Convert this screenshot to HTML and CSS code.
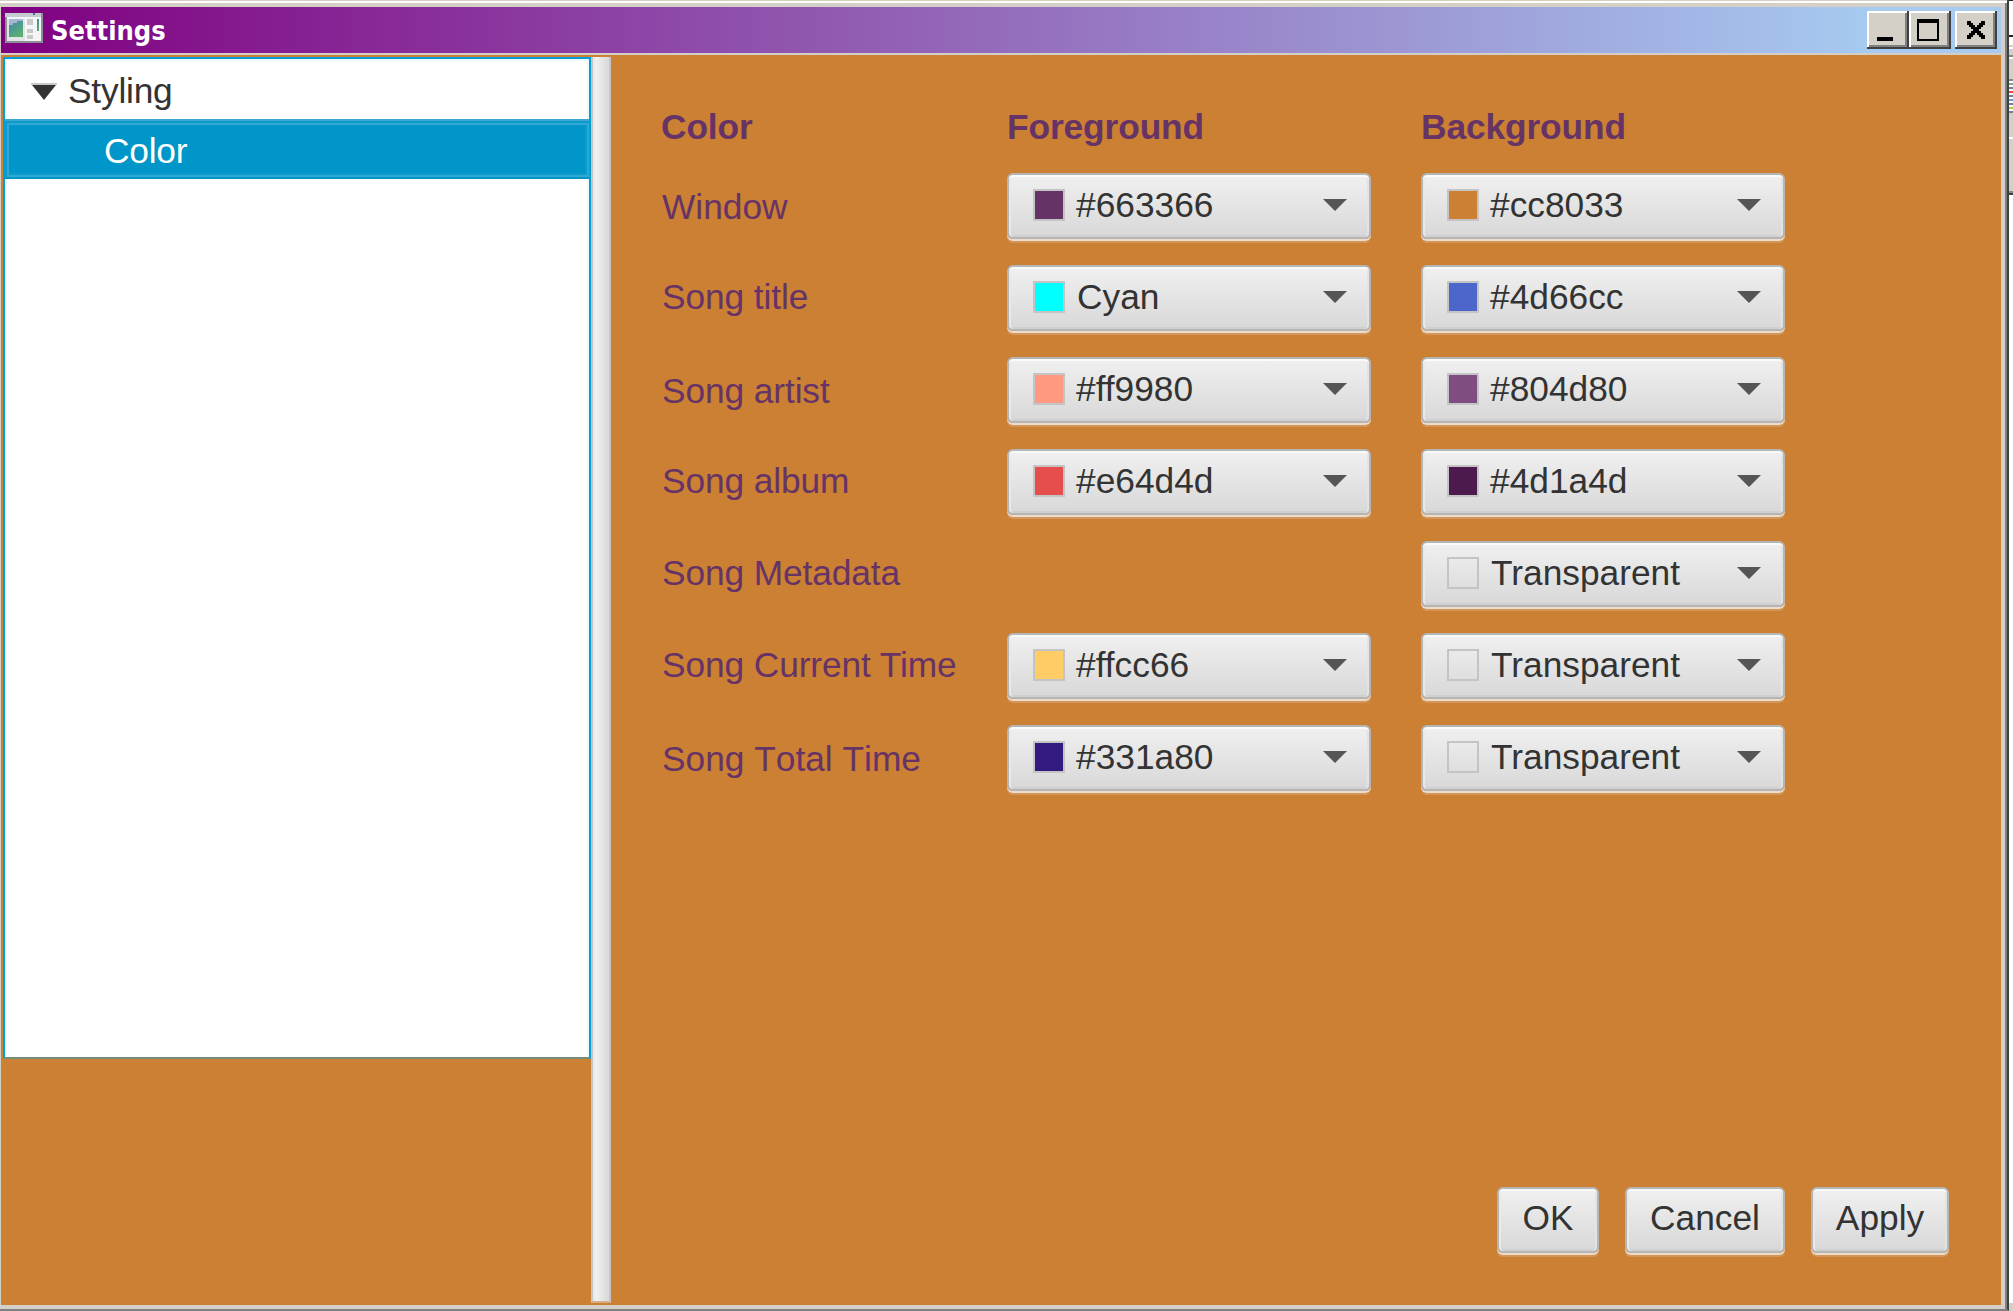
FILE: index.html
```html
<!DOCTYPE html>
<html lang="en">
<head>
<meta charset="utf-8">
<title>Settings</title>
<link rel="stylesheet" href="styles.css">
</head>
<body>
<div class="desktop">
<div class="window">
  <header class="titlebar">
    <svg class="app-icon" width="38" height="30" viewBox="0 0 38 30">
      <defs><linearGradient id="g" x1="0" y1="0" x2="0.6" y2="1"><stop offset="0" stop-color="#4580b4"/><stop offset="1" stop-color="#58b070"/></linearGradient></defs>
      <rect width="38" height="30" fill="#8a9094"/><rect x="2" width="34" height="28" fill="#f4f5f6"/>
      <rect width="36" height="4" fill="#c3ccd0"/><rect x="28" width="2" height="2" fill="#4a6c96"/>
      <rect x="2" y="6" width="18" height="22" fill="#e2e4e6"/><rect x="4" y="6" width="14" height="18" fill="url(#g)"/>
      <path d="M4 6h14v2h-6v2h-4v2H4z" fill="#a4b6d0"/>
      <path d="M22 6h6v6h-6zM22 16h6v4h-6zM22 22h6v4h-6z" fill="#c9c9c9"/>
      <rect x="32" y="6" width="2" height="12" fill="url(#g)"/>
    </svg>
    <h1 class="title">Settings</h1>
    <div class="controls">
      <button class="ctl" aria-label="Minimize"><svg width="42" height="38"><path d="M10 26h16v4H10z"/></svg></button>
      <button class="ctl" aria-label="Maximize"><svg width="42" height="38"><path fill-rule="evenodd" d="M8 8h22v22H8zM10 12v16h18V12z"/></svg></button>
      <button class="ctl close" aria-label="Close"><svg width="42" height="38" shape-rendering="crispEdges"><path d="M12 10h4v2h2v2h2v2h2v-2h2v-2h2v-2h4v4h-2v2h-2v2h-2v2h2v2h2v2h2v4h-4v-2h-2v-2h-2v-2h-2v2h-2v2h-2v2h-4v-4h2v-2h2v-2h2v-2h-2v-2h-2v-2h-2z"/></svg></button>
    </div>
  </header>
  <main class="body">
    <nav class="tree">
      <div class="node"><svg class="disclosure" width="26" height="17"><path d="M0 0h26v2H0z" fill="#c8c8c8"/><path d="M1 2h24L13 17z" fill="#333"/></svg><span>Styling</span></div>
      <div class="node leaf">Color</div>
    </nav>
    <div class="divider"></div>
    <section class="content">
      <div class="grid">
        <div class="head">Color</div><div class="head">Foreground</div><div class="head">Background</div>
        <div class="label low wide">Window</div>
        <div class="picker"><i style="background:#663366"></i><span>#663366</span><b></b></div>
        <div class="picker"><i style="background:#cc8033"></i><span>#cc8033</span><b></b></div>
        <div class="label">Song title</div>
        <div class="picker named"><i style="background:#00ffff"></i><span>Cyan</span><b></b></div>
        <div class="picker"><i style="background:#4d66cc"></i><span>#4d66cc</span><b></b></div>
        <div class="label low">Song artist</div>
        <div class="picker"><i style="background:#ff9980"></i><span>#ff9980</span><b></b></div>
        <div class="picker"><i style="background:#804d80"></i><span>#804d80</span><b></b></div>
        <div class="label">Song album</div>
        <div class="picker"><i style="background:#e64d4d"></i><span>#e64d4d</span><b></b></div>
        <div class="picker"><i style="background:#4d1a4d"></i><span>#4d1a4d</span><b></b></div>
        <div class="label">Song Metadata</div>
        <div></div>
        <div class="picker named"><i></i><span>Transparent</span><b></b></div>
        <div class="label">Song Current Time</div>
        <div class="picker"><i style="background:#ffcc66"></i><span>#ffcc66</span><b></b></div>
        <div class="picker named"><i></i><span>Transparent</span><b></b></div>
        <div class="label low wide">Song Total Time</div>
        <div class="picker"><i style="background:#331a80"></i><span>#331a80</span><b></b></div>
        <div class="picker named"><i></i><span>Transparent</span><b></b></div>
      </div>
      <footer class="actions">
        <button class="btn ok">OK</button><button class="btn cancel">Cancel</button><button class="btn apply">Apply</button>
      </footer>
    </section>
  </main>
</div>
<svg class="behind" width="4" height="1311" shape-rendering="crispEdges">
  <path d="M0 0h4v1H0zM0 35h4v2H0z" fill="#222"/>
  <path d="M0 45h4v2H0zM0 49h4v6H0zM0 59h4v20H0zM0 113h4v24H0zM0 139h4v52H0zM0 1303h4v8H0z" fill="#d4d0c8"/>
  <path d="M0 55h4v2H0zM0 79h4v2H0zM0 191h4v2H0z" fill="#888"/><path d="M0 193h4v2H0z" fill="#404040"/>
  <path d="M0 87h4v2H0zM0 95h4v2H0zM0 103h4v2H0zM0 111h4v2H0z" fill="#708090"/>
  <path d="M0 83h4v2H0z" fill="#7fa58b"/><path d="M0 91h4v2H0z" fill="#f04040"/><path d="M0 99h4v2H0z" fill="#5c9be0"/><path d="M0 107h4v2H0z" fill="#a8d050"/>
</svg>
</div>
</body>
</html>
```
FILE: styles.css
```css
* { box-sizing: border-box; }
body { margin: 0; overflow: hidden; font: 35.3px/40px "Liberation Sans", Arial, sans-serif; color: #333; }
.desktop { display: flex; width: 2013px; height: 1311px; background: #fff; }
.window { display: flex; flex-direction: column; width: 2009px; background: #d4d0c8; padding: 7px 6px 4px 1px; border-right: 2px solid #404040; border-bottom: 2px solid #808080;
  box-shadow: inset 0 1px #d4d0c8, inset 0 3px #fff, inset -2px 0 #808080; }
.behind { display: block; }

.titlebar { display: flex; height: 46px; background: linear-gradient(90deg, #800080, #a6caf0 1870px); padding: 4px 4px 0; }
.app-icon { margin-top: 2px; }
.title { margin: 6px 0 0 8px; flex: 1; color: #fff; font: bold 27px/28px "DejaVu Sans Condensed", "DejaVu Sans", sans-serif; font-stretch: condensed; }
.controls { display: flex; }
.ctl { width: 42px; height: 38px; padding: 0; border: 0; background: #d4d0c8; box-shadow: inset -2px -2px #404040, inset 2px 2px #fff, inset -4px -4px #808080; }
.ctl svg { display: block; }
.close { margin-left: 4px; }

.body { display: flex; height: 1250px; margin-top: 2px; padding: 2px 0 0 2px; background: #cc8033; flex: none; }
.tree { width: 588px; height: 1002px; background: #fff; border: 2px solid #039ed3; border-bottom-color: #768e78; box-shadow: inset 2px 2px #edf8fc, inset -2px 0 #edf8fc; }
.node { height: 60px; display: flex; align-items: flex-start; padding: 12px 0 0 26px; letter-spacing: -0.2px; }
.disclosure { margin: 12px 11px 0 0; }
.leaf { padding: 10px 0 0 99px; color: #fff; background: #0096c9; border-top: 2px solid #3aa8d3; border-bottom: 2px solid #0093c5; box-shadow: inset 2px 2px #0c9bcc, inset -2px -2px #2fa8d4, inset 4px 4px #30a9d4, inset -4px -4px #0c9bcc; }
.divider { width: 20px; height: 1246px; background: linear-gradient(90deg, #f5f5f5, #d9d9d9); border: solid #c6c6c6; border-width: 0 2px; box-shadow: inset 2px 0 #e9e9e9; border-bottom: 2px solid #d8ad83; }

.content { flex: 1; display: flex; flex-direction: column; justify-content: space-between; padding: 48px 52px 52px 50px; }
.grid { display: grid; grid-template-columns: 296px 364px 364px; column-gap: 50px; grid-template-rows: 42px; grid-auto-rows: 66px; row-gap: 26px; color: #663366; }
.head { font-weight: bold; white-space: nowrap; padding-top: 2px; letter-spacing: -0.1px; }
.label { white-space: nowrap; padding: 12px 0 0 1px; letter-spacing: -0.1px; }
.label.low { padding-top: 14px; }
.label.wide { font-kerning: none; letter-spacing: 0; }
.picker, .btn { border: 2px solid #b5b5b5; border-radius: 6px; background: linear-gradient(#f0f0f0, #d8d8d8); color: #333; box-shadow: inset 0 2px #fafafa, inset 2px 0 #e9e9e9, inset -2px 0 #e3e3e3, inset 0 -2px #cfcfcf, 0 2px #eddcca, 0 4px #d3955a; }
.picker { display: flex; padding: 10px 22px 0 24px; }
.picker i { width: 32px; height: 32px; margin: 4px 11px 0 0; border: 2px solid #c4c4c4; background-clip: padding-box; }
.picker span { flex: 1; }
.picker.named span { padding-left: 1px; }
.picker b { width: 24px; height: 12px; margin-top: 14px; background: #555; clip-path: polygon(0 0, 100% 0, 50% 100%); }

.actions { display: flex; justify-content: flex-end; }
.btn { height: 66px; padding: 0 0 4px; font: inherit; text-align: center; }
.ok { width: 102px; }
.cancel { width: 160px; margin-left: 26px; }
.apply { width: 138px; margin-left: 26px; }
```
